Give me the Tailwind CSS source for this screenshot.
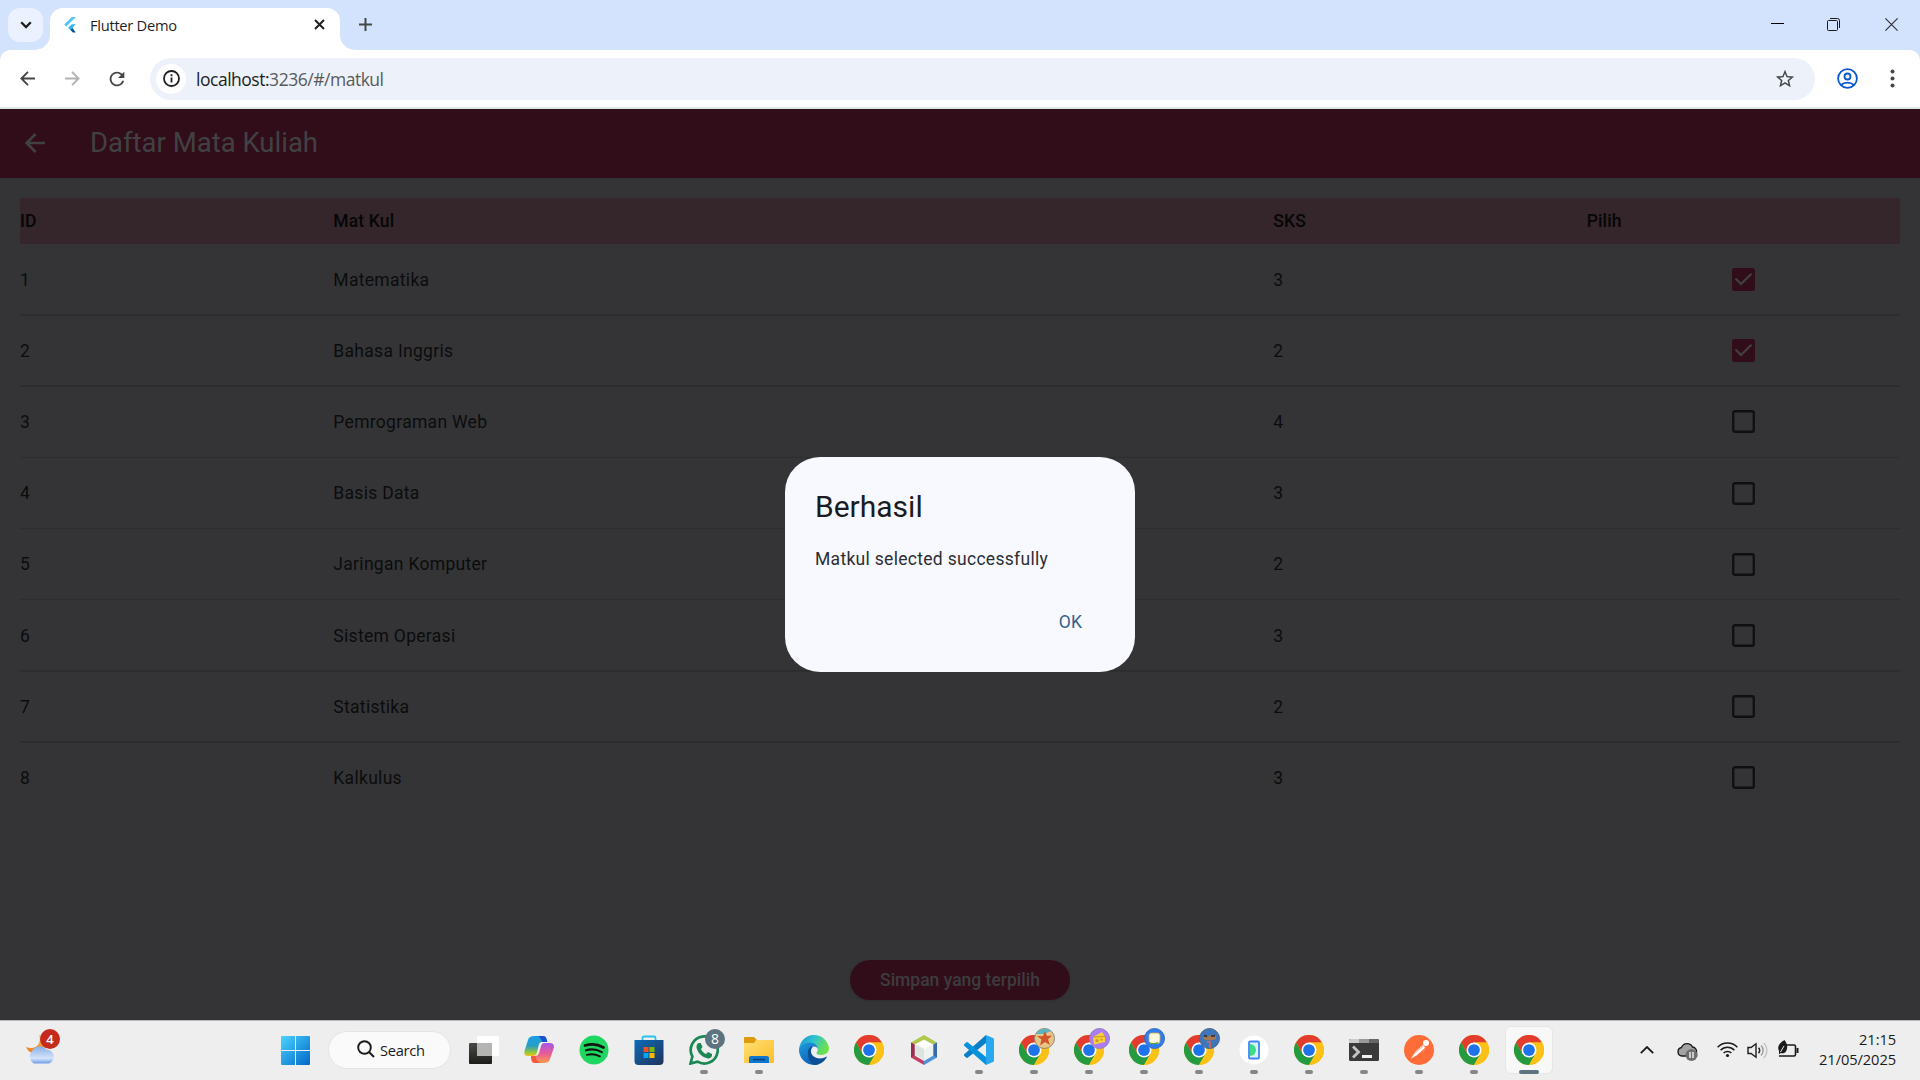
<!DOCTYPE html>
<html lang="id">
<head>
<meta charset="utf-8">
<title>Flutter Demo</title>
<script src="https://cdn.jsdelivr.net/npm/@tailwindcss/browser@4"></script>
</head>
<body class="w-[1920px] h-[1080px] overflow-hidden bg-[#343436] flex flex-col">
<svg class="absolute w-0 h-0">
  <defs>
    <linearGradient id="win" gradientUnits="userSpaceOnUse" x1="0" y1="0" x2="29" y2="29"><stop offset="0" stop-color="#4cd3ff"/><stop offset="1" stop-color="#0067c8"/></linearGradient>
    <linearGradient id="dark" x1="0" y1="0" x2="0" y2="1"><stop offset="0" stop-color="#4a4a46"/><stop offset="1" stop-color="#1c1c1a"/></linearGradient>
    <linearGradient id="cp1" x1="0" y1="0" x2="0" y2="1"><stop offset="0" stop-color="#1b9ee8"/><stop offset=".5" stop-color="#2a9ec2"/><stop offset=".8" stop-color="#8cc63f"/><stop offset="1" stop-color="#f3c51b"/></linearGradient>
    <linearGradient id="cp2" x1="0" y1="0" x2="0" y2="1"><stop offset="0" stop-color="#a557e6"/><stop offset=".5" stop-color="#e75a9d"/><stop offset="1" stop-color="#fb9a4b"/></linearGradient>
    <linearGradient id="store" x1="0" y1="0" x2="1" y2="1"><stop offset="0" stop-color="#0b6cb8"/><stop offset="1" stop-color="#22325a"/></linearGradient>
    <linearGradient id="fold" x1="0" y1="0" x2="1" y2="1"><stop offset="0" stop-color="#ffdf73"/><stop offset="1" stop-color="#fcbd2a"/></linearGradient>
    <linearGradient id="edgeA" x1="0" y1="0" x2="1" y2="0.4"><stop offset="0" stop-color="#1a90d6"/><stop offset=".5" stop-color="#2dc3d0"/><stop offset="1" stop-color="#6ee04c"/></linearGradient>
    <linearGradient id="edgeB" x1="0" y1="0" x2="0.6" y2="1"><stop offset="0" stop-color="#1f9be0"/><stop offset="1" stop-color="#0b60b4"/></linearGradient>
    <linearGradient id="cloud" x1="0" y1="0" x2="0" y2="1"><stop offset="0" stop-color="#89aee9"/><stop offset=".7" stop-color="#d5e4f9"/><stop offset="1" stop-color="#6f9ae8"/></linearGradient>
    <linearGradient id="moon" x1="0" y1="0" x2="0" y2="1"><stop offset="0" stop-color="#f8c63c"/><stop offset="1" stop-color="#ef7b22"/></linearGradient>
    <symbol id="chrome" viewBox="0 0 48 48">
      <circle cx="24" cy="24" r="24" fill="#fbc116"/>
      <path fill="#e33b2e" d="M24 12 H44.800 A24 24 0 0 0 3.200 12 L13.600 30 Z"/>
      <path fill="#249a41" d="M3.200 12 A24 24 0 0 0 24 48 L34.400 30 L24 24 L13.600 30 Z"/>
      <path fill="#fbc116" d="M24 48 A24 24 0 0 0 44.800 12 H24 L34.400 30 Z"/>
      <circle cx="24" cy="24" r="12" fill="#fff"/><circle cx="24" cy="24" r="9.400" fill="#1f73e8"/>
    </symbol>
  </defs>
</svg>

<!-- Browser tab strip -->
<div class="h-[50px] shrink-0 bg-[#d3e3fd] flex items-start font-['Open_Sans',sans-serif]">
  <div class="mt-2 ml-2 w-[35px] h-[34px] rounded-xl bg-[#ebf1fe] flex items-center justify-center">
    <svg class="w-3 h-2 -mt-px" viewBox="0 0 12 8" fill="none" stroke="#1f1f1f" stroke-width="2.3"><path d="M1.2 1.2 6 6l4.800-4.800"/></svg>
  </div>
  <div class="relative ml-[7px] mt-2 w-[290px] h-[42px] rounded-t-[13px] bg-white flex items-center pb-[17px] pt-2 pl-3.5 pr-[15px]">
    <svg class="absolute -left-[15px] bottom-0 w-[15px] h-[15px]" viewBox="0 0 15 15"><path fill="#fff" d="M15 0v15H0A15 15 0 0 0 15 0z"/></svg>
    <svg class="absolute -right-[15px] bottom-0 w-[15px] h-[15px]" viewBox="0 0 15 15"><path fill="#fff" d="M0 0v15h15A15 15 0 0 1 0 0z"/></svg>
    <svg class="w-[12px] h-[16px]" viewBox="0 0 12 16"><path fill="#54c5f8" d="M7.800 0H11.800L2.300 9.500.2 7.500z"/><path fill="#2fb4f4" d="M7.800 7.200h4L8.300 10.800l-2.100 2L4 10.900z"/><path fill="#01579b" d="M6.200 12.800l2.100-2 3.500 4.700H8.800z"/></svg>
    <span class="ml-[14px] text-[14.7px] leading-4 tracking-[-0.28px] text-[#1f1f1f] whitespace-nowrap">Flutter Demo</span>
    <svg class="ml-auto w-[11px] h-[11px]" viewBox="0 0 11 11" stroke="#1f1f1f" stroke-width="2"><path d="M1 1l9 9M10 1l-9 9"/></svg>
  </div>
  <svg class="ml-[19px] mt-[18px] w-[13px] h-[13px]" viewBox="0 0 13 13" stroke="#444746" stroke-width="2"><path d="M6.500 0v13M0 6.500h13"/></svg>
  <div class="ml-auto flex items-center h-[49px] pr-[22px]">
    <svg class="w-[13px] h-[13px] mr-[43px] -mt-0.5" viewBox="0 0 13 13"><path fill="#000" d="M0 6h13v1H0z"/></svg>
    <svg class="w-[13px] h-[13px] mr-[45px]" viewBox="0 0 13 13" fill="none" stroke="#1a1a1a"><rect x=".5" y="2.500" width="10" height="10" rx="1"/><path d="M3 .5h7.500a2 2 0 0 1 2 2V10"/></svg>
    <svg class="w-[13px] h-[13px]" viewBox="0 0 13 13" stroke="#333" stroke-width="1.200"><path d="M.4.4l12.200 12.200M12.600.4.4 12.600"/></svg>
  </div>
</div>

<!-- Browser toolbar -->
<div class="h-[59px] shrink-0 bg-[#d3e3fd]">
  <div class="h-full bg-white rounded-t-[10px] border-b-2 border-[#dfe7e4] flex items-center pl-[20px] font-['Open_Sans',sans-serif]">
    <svg class="w-[15px] h-[15px]" viewBox="0 0 16 16" fill="none" stroke="#444746" stroke-width="2"><path d="M16 8H1.500M8.500 1 1.500 8l7 7"/></svg>
    <svg class="ml-[30px] w-[15px] h-[15px]" viewBox="0 0 16 16" fill="none" stroke="#b1b2b3" stroke-width="2"><path d="M0 8h14.500M7.500 1l7 7-7 7"/></svg>
    <svg class="ml-[26px] mr-px w-[22px] h-[22px]" viewBox="0 0 24 24"><path fill="#444746" d="M17.650 6.350A7.958 7.958 0 0 0 12 4c-4.420 0-7.990 3.580-7.990 8s3.570 8 7.990 8c3.730 0 6.840-2.550 7.730-6h-2.080A5.990 5.990 0 0 1 12 18c-3.310 0-6-2.690-6-6s2.690-6 6-6c1.660 0 3.140.69 4.220 1.780L13 11h7V4l-2.350 2.350z"/></svg>
    <div class="ml-[21px] w-[1665px] h-[42px] rounded-full bg-[#ecf1fa] flex items-center pl-[6px] pr-[19px]">
      <div class="w-[30px] h-[30px] rounded-full bg-white flex items-center justify-center">
        <svg class="w-[17px] h-[17px]" viewBox="0 0 17 17" fill="none" stroke="#1f1f1f" stroke-width="1.800"><circle cx="8.500" cy="8.500" r="7.500"/><path d="M8.500 7.500v5M8.500 4.300v1.900"/></svg>
      </div>
      <span class="ml-2.5 text-[17.5px] leading-6 tracking-[-0.48px] text-[#1f1f1f] whitespace-nowrap">localhost:<span class="text-[#5a5a5a]">3236/#/matkul</span></span>
      <svg class="ml-auto w-[22px] h-[22px]" viewBox="0 0 24 24"><path fill="#444746" d="M22 9.240l-7.190-.62L12 2 9.190 8.630 2 9.240l5.460 4.730L5.820 21 12 17.270 18.180 21l-1.630-7.030L22 9.240zM12 15.400l-3.760 2.270 1-4.280-3.320-2.880 4.380-.38L12 6.100l1.710 4.040 4.380.38-3.320 2.880 1 4.280L12 15.400z"/></svg>
    </div>
    <svg class="ml-[22px] w-[21px] h-[21px]" viewBox="0 0 21 21" fill="none" stroke="#0b57d0" stroke-width="1.800"><circle cx="10.500" cy="10.500" r="9.400"/><circle cx="10.500" cy="8.500" r="3"/><path d="M4 17c3.500-3.200 9.500-3.200 13 0"/></svg>
    <svg class="ml-[32px] w-[5px] h-[19px]" viewBox="0 0 5 19" fill="#444746"><circle cx="2.500" cy="2.500" r="2"/><circle cx="2.500" cy="9.500" r="2"/><circle cx="2.500" cy="16.500" r="2"/></svg>
  </div>
</div>

<!-- App content under the modal scrim -->
<main class="relative h-[911px] shrink-0 bg-[#343436] flex flex-col font-['Roboto',sans-serif] text-[17.5px] leading-[25px]">
  <header class="h-[69px] shrink-0 bg-[#310d1a] flex items-center pl-[25px] text-[#414143]">
    <svg class="w-5 h-5 -mt-px" viewBox="0 0 20 20" fill="none" stroke="#414143" stroke-width="2.500"><path d="M20 10H2M10.600 1l-9 9 9 9"/></svg>
    <h1 class="ml-[45px] -mt-0.5 text-[27.5px] leading-9">Daftar Mata Kuliah</h1>
  </header>
  <section class="mx-5 mt-5">
    <div class="h-[46px] bg-[#34262a] grid grid-cols-[1fr_3fr_1fr_1fr] items-center font-medium tracking-[0.15px] text-[#060607]">
      <span>ID</span><span>Mat Kul</span><span>SKS</span><span>Pilih</span>
    </div>
    <div id="rows"></div>
  </section>
  <div class="mt-auto mb-[20px] flex justify-center">
    <div class="w-[220px] h-10 rounded-full bg-[#310d1a] text-[#3c3c3e] font-medium tracking-[0px] flex items-center justify-center shadow-sm">Simpan yang terpilih</div>
  </div>
  <!-- Success dialog -->
  <div class="absolute left-[785px] top-[347.500px] w-[350px] h-[215px] rounded-[35px] bg-[#f8f9ff] flex flex-col px-[30px] pt-[30.500px]">
    <h2 class="text-[30px] leading-10 text-[#191c20]">Berhasil</h2>
    <p class="mt-5 tracking-[0.3px] text-[#2b2e33] whitespace-nowrap">Matkul selected successfully</p>
    <span class="mt-[38px] self-end mr-[23px] tracking-[0.12px] text-[#36618e]">OK</span>
  </div>
</main>

<!-- Taskbar -->
<footer class="h-[60px] shrink-0 bg-[#eee] shadow-[inset_0_1px_0_#b9b6b7] flex items-center font-['Open_Sans',sans-serif]">
  <div class="relative w-[268px] h-[60px]">
    <svg class="absolute left-[25px] top-[15px] w-[32px] h-[30px]" viewBox="0 0 32 30"><path fill="url(#moon)" d="M14 0C17 8 11 16 1 12c1 3 4 6 9 6 8 0 12-6 10-12-1-3-3-5-6-6z"/><path fill="url(#cloud)" d="M9 28.500a8 8 0 0 1-1.500-13 8.500 8.500 0 0 1 14-1A7.200 7.200 0 0 1 24 28.500z"/></svg>
    <span class="absolute left-10 top-[9px] w-5 h-5 rounded-full bg-[#c42b1c] text-white text-[13px] leading-5 font-semibold text-center">4</span>
  </div>
  <div class="w-[55px] flex justify-center"><svg class="w-[29px] h-[29px]" viewBox="0 0 29 29" fill="url(#win)"><path d="M1 0h13v14H0V1a1 1 0 0 1 1-1zM15 0h13a1 1 0 0 1 1 1v13H15zM0 15h14v14H1a1 1 0 0 1-1-1zM15 15h14v13a1 1 0 0 1-1 1H15z"/></svg></div>
  <div class="ml-[5px] mr-[5px] w-[123px] h-[38px] rounded-full bg-[#fafafa] border border-[#e5e5e5] flex items-center pl-[28px]">
    <svg class="w-[18px] h-[18px] -mt-0.5" viewBox="0 0 18 18" fill="none" stroke="#1b1b1b" stroke-width="1.900"><circle cx="7.500" cy="7.500" r="6.300"/><path d="M12 12l5 5"/></svg>
    <span class="ml-[5px] text-[14.700px] leading-5 tracking-[-0.3px] text-[#1b1b1b]">Search</span>
  </div>
  <div id="apps" class="flex h-[60px]"></div>
  <div class="ml-auto flex items-center h-[60px] text-[#1b1b1b]">
    <svg class="w-[14px] h-[8px] mr-[23px]" viewBox="0 0 14 8" fill="none" stroke="#1b1b1b" stroke-width="1.800"><path d="M.8 7.200 7 1l6.200 6.200"/></svg>
    <svg class="w-[21px] h-[19px] mr-[19px] mt-0.5" viewBox="0 0 21 19"><path d="M5 14a4.300 4.300 0 0 1-.5-8.500A6 6 0 0 1 15.500 5a4.500 4.500 0 0 1 4 5v4z" fill="#a3a3a3" stroke="#1b1b1b" stroke-width="1.400"/><circle cx="14.500" cy="13" r="6" fill="#6e6e6e"/><path d="M13 10v6M16 10v6" stroke="#fff" stroke-width="1.300"/></svg>
    <svg class="w-[21px] h-[17px] mr-[9px] -mt-px" viewBox="0 0 21 17" fill="none" stroke="#1b1b1b" stroke-width="1.500"><path d="M.6 6.200a14 14 0 0 1 19.800 0M3.600 9.200a9.700 9.700 0 0 1 13.800 0M6.600 12a5.500 5.500 0 0 1 7.800 0"/><circle cx="10.500" cy="14.500" r="1.600" fill="#1b1b1b" stroke="none"/></svg>
    <svg class="w-[21px] h-[17px] mr-[9px]" viewBox="0 0 21 17" fill="none" stroke="#1b1b1b" stroke-width="1.400"><path d="M1 5.500h3L9 1.800v13.400l-5-3.700H1z"/><path d="M11.500 5.800a4 4 0 0 1 0 5.400"/><path stroke="#999" d="M14 3.500a7 7 0 0 1 0 10"/><path stroke="#c4c4c4" d="M16.700 1a10.500 10.500 0 0 1 0 15"/></svg>
    <svg class="w-[22px] h-[18px] -mt-0.5" viewBox="0 0 22 18"><path d="M9 5h8a1.500 1.500 0 0 1 1.500 1.500v8A1.500 1.500 0 0 1 17 16H2" fill="none" stroke="#1b1b1b" stroke-width="1.600"/><path d="M19.500 8h2v5h-2z" fill="#1b1b1b"/><path d="M7.500 0C11 4 11 10 8 12.500c-1.500 1-3 1-4.500.5L2 14.500V11C0 7 2 3 7.500 0z" fill="#1b1b1b"/><path d="M3.500 12 7 6" stroke="#eee"/></svg>
    <div class="ml-[20px] mr-[24px] -mt-[3px] text-right text-[14.700px] leading-5 tracking-[-0.100px]"><div>21:15</div><div>21/05/2025</div></div>
  </div>
</footer>

<script>
  const checked = '<svg class="w-[23px] h-[23px] -mt-px" viewBox="0 0 23 23"><rect width="23" height="23" rx="2.500" fill="#310d1a"/><path d="M3.500 10.500 9 16l10.500-10.300" fill="none" stroke="#414143" stroke-width="2.200"/></svg>';
  const empty = '<svg class="w-[23px] h-[23px] -mt-px" viewBox="0 0 23 23"><rect x="1.250" y="1.250" width="20.500" height="20.500" rx="1.500" fill="none" stroke="#0e0f10" stroke-width="2.300"/></svg>';
  const courses = [["Matematika",3,1],["Bahasa Inggris",2,1],["Pemrograman Web",4,0],["Basis Data",3,0],["Jaringan Komputer",2,0],["Sistem Operasi",3,0],["Statistika",2,0],["Kalkulus",3,0]];
  document.getElementById("rows").innerHTML = courses.map(([name, sks, on], i) =>
    `<div class="relative h-[71.2px] pt-px grid grid-cols-[1fr_3fr_1fr_1fr] items-center text-[#0b0c0d] tracking-[0.3px]"><span>${i + 1}</span><span>${name}</span><span>${sks}</span><span class="flex justify-center">${on ? checked : empty}</span>${i < 7 ? '<div class="absolute inset-x-0 -bottom-[0.500px] h-[1.5px] bg-[#2d2d2f]"></div>' : ''}</div>`).join("");

  const chrome = '<use href="#chrome" width="30" height="30"/>';
  const icons = [
    // task view
    ['<rect y="8" width="23" height="21" rx="1" fill="url(#dark)"/><rect x="8" y="1" width="22" height="20" rx="1" fill="#fff" fill-opacity=".93"/><rect x="8" y="8" width="15" height="13" fill="#b4b4b2"/>'],
    // copilot
    ['<path d="M10 1h9c2 0 3 1 3.500 3l.8 3h-5c-2 0-3 1-3.500 3l-2 8c-.6 2-1.600 3-3.600 3H4c-3 0-4-2-3.500-5L4 5c.8-3 3-4 6-4z" fill="url(#cp1)"/><path d="M13 1h6c2 0 3 1 3.500 3l.8 3h-5c-1.500-4-3-6-5.300-6z" fill="#1c4fd0"/><path d="M20 28h-9c-2 0-3-1-3.500-3L7 21h4.500c1.500 0 2.600-1 3.500-3l2-7c.6-2 1.500-3 3.500-3H26c3 0 4.500 2 3.800 5L26 24c-.8 3-3 4-6 4z" fill="url(#cp2)"/><path d="M17 28h-6c-2 0-3-1-3.500-3L7 21h4.500c1 4 2.500 7 5.500 7z" fill="#f4583f"/>'],
    // spotify
    ['<circle cx="15" cy="15" r="14.500" fill="#1ed760"/><g fill="none" stroke="#10140f" stroke-linecap="round"><path d="M6 10.500c6-1.700 13-1.100 18.500 2" stroke-width="2.700"/><path d="M7 15.300c5.500-1.500 11-.9 15.800 1.800" stroke-width="2.200"/><path d="M7.700 19.800c4.800-1.200 9-.7 13.200 1.600" stroke-width="1.900"/></g>'],
    // store
    ['<path d="M8.500 6V3a1.500 1.500 0 0 1 1.500-1.500h10A1.500 1.500 0 0 1 21.500 3v3" fill="none" stroke="#27c1f2" stroke-width="1.800"/><path d="M.5 5h29v21a4 4 0 0 1-4 4h-21a4 4 0 0 1-4-4z" fill="url(#store)"/><path fill="#f25022" d="M9.500 12h5v5h-5z"/><path fill="#7fba00" d="M15.500 12h5v5h-5z"/><path fill="#00a4ef" d="M9.500 18h5v5h-5z"/><path fill="#ffb900" d="M15.500 18h5v5h-5z"/>', 0],
    // whatsapp
    ['<path d="M1.500 28.500 3.400 21.500A13.500 13.500 0 1 1 8.500 26.700z" fill="none" stroke="#1b8755" stroke-width="2.700"/><path fill="#1b8755" d="M9.500 8h2.200l1.800 4-1.500 2c1 2.400 2.700 4 5 5l2-2 4 2v2c-1 2.200-3 2.800-5 2.300C12.500 21.800 8.500 17.500 7.500 12.500c-.2-2 .7-3.600 2-4.500z"/>', 1, '<span class="absolute left-[29px] top-[9px] w-5 h-5 rounded-full bg-[#5d7480] text-white text-[14px] leading-5 text-center">8</span>'],
    // explorer
    ['<path d="M0 3a1 1 0 0 1 1-1h9l3 3h15a2 2 0 0 1 2 2v5H0z" fill="#dd9a0c"/><path d="M0 8h10l2-3h16a2 2 0 0 1 2 2v20a1 1 0 0 1-1 1H0z" fill="url(#fold)"/><path d="M5 28v-5a2 2 0 0 1 2-2h16a2 2 0 0 1 2 2v5z" fill="#0f77cb"/><path d="M9 24.500h12" stroke="#0a3f79" stroke-width="1.500"/>', 1],
    // edge
    ['<path d="M15 0a15 15 0 0 1 15 13c0 5-4 7-8 7-3 0-4.500-1-4.500-2 0-.8 1.300-1.200 1.300-3.500 0-3-3.500-5-7-5C5 9.500 1 13 0 16 0 7 6 0 15 0z" fill="url(#edgeA)"/><path d="M0 16C0 11 5 7.500 10.500 7.500c5 0 8.300 3 8.300 7 0-2-2-3-3.800-3-3 0-5 3-5 6.500C10 24 15 28 20 29A15 15 0 0 1 0 16z" fill="url(#edgeB)"/><path d="M9 17c0-3 2-5.500 5-5.500-1.500 1.500-2 3-2 5 0 4 4.500 7 9 7 2.500 0 4.500-.7 6-1.700.8-.3 1 .3.700.8A15 15 0 0 1 15 30c-4-1.500-6.500-7-6-13z" fill="#0c4f97"/>'],
    [chrome],
    // netbeans
    ['<path d="M15 0 28 7.500l-3.500 2L15 4.500l-9.500 5L2 7.500z" fill="#b0c94b"/><path d="M2 7.500 5.500 9.500v11L15 26v4L2 22.500z" fill="#c63d62"/><path d="M2 7.500 5.500 9.500v11L2 22.500z" fill="#972d52"/><path d="M28 7.500v15L15 30v-4l9.500-5.500v-11z" fill="#5093dd"/><path d="M28 7.500v15l-3.500-2v-11z" fill="#3a69ad"/><path d="M15 5l8.500 4.500L15 14 6.500 9.500z" fill="#fff"/><path d="M6.500 9.500 15 14v10.500l-8.500-5z" fill="#dce4df"/><path d="M23.500 9.500 15 14v10.500l8.500-5z" fill="#f0f4f1"/>'],
    // vs code
    ['<path d="M22 0l7 3a2 2 0 0 1 1 1.500v21a2 2 0 0 1-1 1.500l-7 3z" fill="#29a8f2"/><path d="M22 0v8L4 22.500a1.500 1.500 0 0 1-2 0L.5 21a1.300 1.300 0 0 1 0-2z" fill="#0a7fc9"/><path d="M22 30v-8L4 7.500a1.500 1.500 0 0 0-2 0L.5 9a1.300 1.300 0 0 0 0 2z" fill="#0892dc"/>', 1],
    [chrome, 1, '<svg class="absolute left-[28px] top-[8px] w-[21px] h-[21px]" viewBox="0 0 21 21"><circle cx="10.500" cy="10.500" r="10" fill="#e5c685" stroke="#8d8777"/><path d="M2 6a10 10 0 0 1 15-3L10 6z" fill="#58b5c4"/><path d="M11 3l2 5 5-.5-4 4 2 5.500-5-3-5 3.500 1.500-6L3 8l6 .2z" fill="#d2542b"/></svg>'],
    [chrome, 1, '<svg class="absolute left-[28px] top-[8px] w-[21px] h-[21px]" viewBox="0 0 21 21"><circle cx="10.500" cy="10.500" r="10" fill="#ab7cf5" stroke="#8f7fb5"/><path d="M4 9l9-5 3 4.500v5.500l-11 2.500z" fill="#f6cf3d"/><path d="M4 9l12-.5" stroke="#c8961d"/><circle cx="8" cy="12.500" r="1.500" fill="#c8961d"/><circle cx="12.500" cy="11.500" r="1.100" fill="#c8961d"/></svg>'],
    [chrome, 1, '<svg class="absolute left-[28px] top-[8px] w-[21px] h-[21px]" viewBox="0 0 21 21"><circle cx="10.500" cy="10.500" r="10" fill="#2f7df0" stroke="#346bb8"/><rect x="5" y="5" width="11" height="10.500" rx="2.500" fill="#fbf6dc" stroke="#d5a642" stroke-width=".8"/><path d="M5 14.500q5 2.500 9 0" stroke="#58a545" stroke-width="1.300" fill="none"/></svg>'],
    [chrome, 1, '<svg class="absolute left-[28px] top-[8px] w-[21px] h-[21px]" viewBox="0 0 21 21"><circle cx="10.500" cy="10.500" r="10" fill="#3f76ba" stroke="#4c6688"/><path d="M4 8q3 2 6 0t7 0v3q-5 2-9 1-4 0-4-4z" fill="#a8794f"/><path d="M5 7.500l3 1M12 8h4" stroke="#2d2a2e" stroke-width="1.500"/><path d="M8 14h3v6" stroke="#b26b72" stroke-width="2" fill="none"/></svg>'],
    // android emulator
    ['<circle cx="15" cy="15" r="14.500" fill="#fff"/><rect x="10" y="6.500" width="10" height="17" rx="1" fill="#d9f2f6" stroke="#4285f4" stroke-width="1.800"/><path d="M11 9a6 6 0 0 1 0 12z" fill="#3ddc84"/>', 1],
    [chrome, 1],
    // terminal
    ['<rect y="4" width="30" height="22" rx="1.500" fill="#3a3a3a"/><path d="M1.500 4H10v4H0V5.500A1.500 1.500 0 0 1 1.500 4z" fill="#ccc"/><path d="M10 4h10v4H10z" fill="#999"/><path d="M20 4h8.500A1.500 1.500 0 0 1 30 5.500V8H20z" fill="#666"/><path d="M4 11.500l5.500 5.500L4 22.500" fill="none" stroke="#c4c4c4" stroke-width="2.800"/><path d="M13 20h10v3H13z" fill="#f1f1f1"/>', 1],
    // postman
    ['<circle cx="15" cy="15" r="15" fill="#ff6c37"/><circle cx="22" cy="8" r="3" fill="#fff"/><path d="M19 10l2.500 2.500-9 8L7 23.500l4.500-7z" fill="#fff"/><path d="M19 11l-8 7M21 12l-2 6" stroke="#f7a386" stroke-width=".8"/>', 1],
    [chrome, 1],
    [chrome, 2],
  ];
  const bars = ['', '<i class="absolute left-[24px] top-[50px] w-2 h-1 rounded-full bg-[#868686]"></i>', '<i class="absolute left-[18px] top-[50px] w-5 h-1 rounded-full bg-[#5d7480]"></i>'];
  document.getElementById("apps").innerHTML = icons.map(([art, state = 0, badge = '']) =>
    `<div class="relative w-[55px] h-[60px] flex items-center justify-center">${state === 2 ? '<div class="absolute left-[4px] top-[6px] w-[48px] h-[48px] rounded-md bg-[#f8f8f8] border border-[#e6e6e6]"></div>' : ''}<svg class="relative w-[30px] h-[30px]" viewBox="0 0 30 30">${art}</svg>${badge}${bars[state]}</div>`).join("");
</script>
</body>
</html>
